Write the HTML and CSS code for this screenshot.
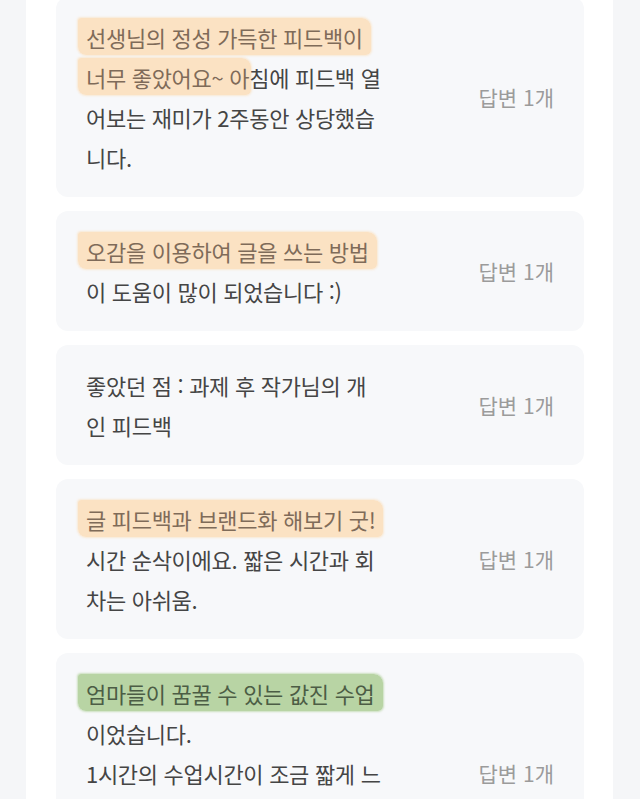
FILE: index.html
```html
<!DOCTYPE html>
<html lang="ko">
<head>
<meta charset="utf-8">
<title>수업 후기</title>
<link rel="stylesheet" href="styles.css">
</head>
<body>
<div class="panel">
  <div class="list">
    <div class="card">
      <p class="text"><span class="hl">선생님의 정성 가득한 피드백이</span><br><span class="hl short">너무 좋았어요~ 아</span>침에 피드백 열<br>어보는 재미가 2주동안 상당했습<br>니다.</p>
      <span class="count">답변 1개</span>
    </div>
    <div class="card">
      <p class="text"><span class="hl">오감을 이용하여 글을 쓰는 방법</span><br>이 도움이 많이 되었습니다 :)</p>
      <span class="count">답변 1개</span>
    </div>
    <div class="card">
      <p class="text">좋았던 점 : 과제 후 작가님의 개<br>인 피드백</p>
      <span class="count">답변 1개</span>
    </div>
    <div class="card">
      <p class="text"><span class="hl">글 피드백과 브랜드화 해보기 굿!</span><br>시간 순삭이에요. 짧은 시간과 회<br>차는 아쉬움.</p>
      <span class="count">답변 1개</span>
    </div>
    <div class="card tall">
      <p class="text"><span class="hl green">엄마들이 꿈꿀 수 있는 값진 수업</span><br>이었습니다.<br>1시간의 수업시간이 조금 짧게 느</p>
      <span class="count">답변 1개</span>
    </div>
  </div>
</div>
</body>
</html>
```
FILE: styles.css
```css
html, body {
  margin: 0;
  padding: 0;
}
body {
  background: #f5f6f8;
  font-family: "Noto Sans CJK KR", "Noto Sans", sans-serif;
  overflow: hidden;
}
.panel {
  width: 587px;
  margin-left: 26px;
  background: #ffffff;
  min-height: 1000px;
}
.list {
  display: flex;
  flex-direction: column;
  gap: 14px;
  padding: 0 29px 0 30px;
  margin-top: -3px;
}
.card {
  display: flex;
  align-items: center;
  background: #f7f8fa;
  border-radius: 12px;
  padding: 20px 30px 20px 30px;
}
.card.tall {
  min-height: 200px;
}
.card.tall .text {
  align-self: flex-start;
}
.text {
  margin: 0;
  font-size: 22px;
  line-height: 40px;
  letter-spacing: -0.3px;
  color: #454545;
  white-space: nowrap;
}
.hl {
  background: #fbe2c3;
  color: #7f6b59;
  padding: 3px 8px 2px 8px;
  margin: 0 -8px;
  border-radius: 3px 9px 5px 8px;
  box-shadow: 0 0 2px 1px rgba(251, 226, 195, 0.7);
}
.hl.short {
  padding-right: 2px;
  margin-right: -2px;
}
.hl.green {
  background: #b8d4a4;
  color: #4c5d45;
  box-shadow: 0 0 2px 1px rgba(184, 212, 164, 0.7);
}
.count {
  margin-left: auto;
  font-size: 21px;
  color: #9b9b9b;
  white-space: nowrap;
}
```
